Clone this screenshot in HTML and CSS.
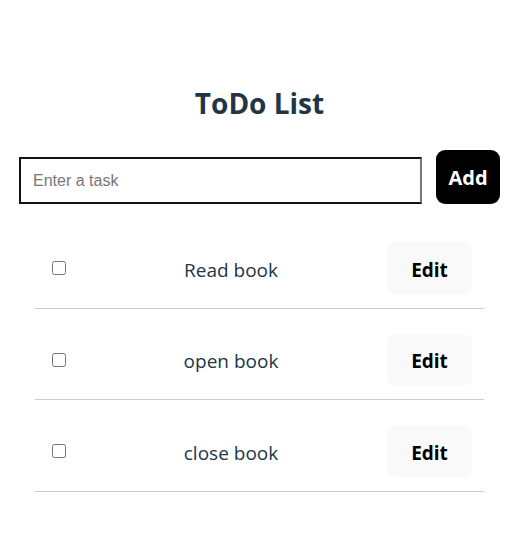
FILE: index.html
```html
<!DOCTYPE html>
<html>
<head>
<meta charset="utf-8">
<link rel="stylesheet" href="styles.css">
</head>
<body>
<div class="app">
  <h1 class="title">ToDo List</h1>
  <div class="add-row">
    <input class="task-input" type="text" placeholder="Enter a task">
    <button class="add-btn">Add</button>
  </div>
  <ul class="list">
    <li class="item"><input type="checkbox" class="check"><span class="text">Read book</span><button class="edit-btn">Edit</button></li>
    <li class="item"><input type="checkbox" class="check"><span class="text">open book</span><button class="edit-btn">Edit</button></li>
    <li class="item"><input type="checkbox" class="check"><span class="text">close book</span><button class="edit-btn">Edit</button></li>
  </ul>
</div>
</body>
</html>
```
FILE: styles.css
```css
html, body { margin: 0; padding: 0; background: #fff; }
body { font-family: "Open Sans", "Noto Sans", sans-serif; color: #213547; }
.app { width: 481px; padding: 84px 0 0 19px; }
.title { margin: 0 0 28px; text-align: center; font-size: 28px; font-weight: 700; line-height: 38px; color: #213547; }
.add-row { display: flex; align-items: flex-start; gap: 14px; }
.task-input {
  margin-top: 7px; width: 403px; height: 47px; box-sizing: border-box;
  border: 2px solid #111; border-right-color: #777; padding: 0 12px;
  font-family: "Liberation Sans", Arial, sans-serif; font-size: 16px; color: #222; outline: none;
}
.task-input::placeholder { color: #777; }
.add-btn {
  width: 64px; height: 54px; border: none; border-radius: 9px; background: #000; color: #fff;
  font-family: "Open Sans", sans-serif; font-weight: 700; font-size: 20px; padding: 0;
}
.list { list-style: none; margin: 13px 16px 0; padding: 0; }
.item {
  display: flex; align-items: center; justify-content: space-between;
  padding: 25px 12px 13.5px 13px; border-bottom: 1px solid #ccc;
}
.check { margin: 3px 3px 3px 4px; width: 14px; height: 14px; }
.text { font-size: 19px; padding: 3px 0 0 6px; }
.edit-btn {
  width: 85px; height: 52px; border: none; border-radius: 8px; background: #f9f9f9; color: #000;
  font-family: "Open Sans", sans-serif; font-weight: 700; font-size: 19px; padding: 3px 0 0;
}
```
